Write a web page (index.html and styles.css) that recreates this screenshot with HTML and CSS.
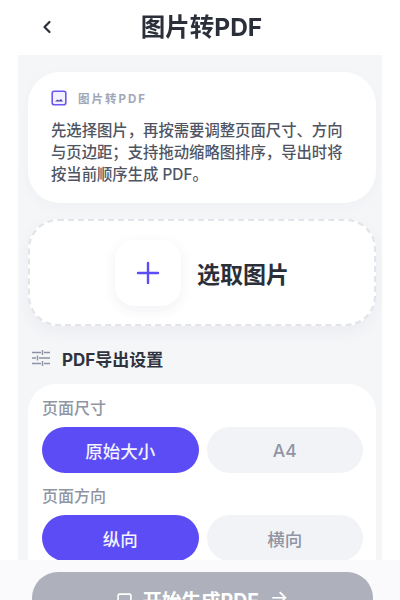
FILE: index.html
```html
<!DOCTYPE html>
<html lang="zh-CN">
<head>
<meta charset="utf-8">
<title>图片转PDF</title>
<link rel="stylesheet" href="styles.css">
</head>
<body>
<div class="page">
  <header class="topbar">
    <svg class="back" viewBox="0 0 10 14" width="10" height="14"><path d="M7.5 2 L2.5 7 L7.5 12" fill="none" stroke="#2b2f3a" stroke-width="2.2" stroke-linecap="round" stroke-linejoin="round"/></svg>
    <h1 class="title">图片转PDF</h1>
  </header>
  <main class="content">
    <section class="intro">
      <div class="intro-head">
        <svg class="intro-icon" viewBox="0 0 16 16" width="16" height="16"><rect x="1.2" y="1.2" width="13.6" height="13.6" rx="2" fill="#f3f0ff" stroke="#6a56f0" stroke-width="1.6"/><path d="M4 11.5 L6.5 9.5 L8 10.5 L10 9 L12 11.5 Z" fill="#4b3fb5"/></svg>
        <span class="intro-tag">图片转PDF</span>
      </div>
      <p class="intro-text">先选择图片，再按需要调整页面尺寸、方向与页边距；支持拖动缩略图排序，导出时将按当前顺序生成 PDF。</p>
    </section>
    <section class="drop">
      <div class="plus-box">
        <svg viewBox="0 0 24 24" width="24" height="24"><path d="M12 2 V22 M2 12 H22" stroke="#5b4cf5" stroke-width="2.4" stroke-linecap="round" fill="none"/></svg>
      </div>
      <span class="drop-label">选取图片</span>
    </section>
    <div class="section-head">
      <svg viewBox="0 0 20 18" width="20" height="18"><path d="M1 3.5 H10 M13 3.5 H19 M1 9 H5 M8 9 H19 M1 14.5 H10 M13 14.5 H19 M11.5 1 V6 M6.5 6.5 V11.5 M11.5 12 V17" stroke="#8d93a3" stroke-width="1.4" fill="none"/></svg>
      <h2 class="section-title">PDF导出设置</h2>
    </div>
    <section class="settings">
      <div class="field-label">页面尺寸</div>
      <div class="options">
        <div class="opt on">原始大小</div>
        <div class="opt">A4</div>
      </div>
      <div class="field-label">页面方向</div>
      <div class="options">
        <div class="opt on">纵向</div>
        <div class="opt">横向</div>
      </div>
    </section>
  </main>
  <footer class="bottom">
    <div class="start">
      <svg viewBox="0 0 14 14" width="15" height="15"><rect x="1" y="1" width="12" height="12" rx="1.5" fill="none" stroke="#fff" stroke-width="1.5"/></svg>
      <span>开始生成PDF</span>
      <span class="arrow">→</span>
    </div>
  </footer>
</div>
</body>
</html>
```
FILE: styles.css
```css
* { box-sizing: border-box; }
html, body { margin: 0; padding: 0; height: 100%; background: #fff; }
body { font-family: Inter, "Noto Sans CJK SC", sans-serif; color: #2b2f3a; overflow: hidden; }
.page { width: 400px; height: 600px; display: flex; flex-direction: column; overflow: hidden; filter: blur(0.6px); }
.topbar { height: 55px; flex: none; display: flex; align-items: center; justify-content: center; position: relative; }
.back { position: absolute; left: 42px; top: 20px; }
.title { margin: 0 0 0 3px; font-size: 24.5px; font-weight: 700; line-height: 55px; color: #2b2f3a; }
.content { height: 505px; flex: none; margin: 0 18px; padding: 17px 6px 0 10px; background: #f5f6f8; overflow: hidden; }
.intro { height: 131px; background: #fff; border-radius: 32px; padding: 17px 24px 0 23px; box-shadow: 0 4px 14px rgba(40, 50, 90, 0.03); }
.intro-head { display: flex; align-items: center; gap: 11px; height: 17px; }
.intro-tag { font-size: 11.5px; font-weight: 700; letter-spacing: 2px; color: #a2a7b8; }
.intro-text { margin: 14px 0 0; font-size: 15.35px; line-height: 22px; font-weight: 500; color: #4f5563; }
.drop { height: 107px; margin-top: 16px; background: #fff; border: 2px dashed #e2e4ea; border-radius: 30px; display: flex; align-items: center; justify-content: center; gap: 16px; box-shadow: 0 6px 16px rgba(40, 50, 90, 0.05); }
.plus-box { width: 66px; height: 66px; border-radius: 20px; background: #fff; display: flex; align-items: center; justify-content: center; box-shadow: 0 4px 14px rgba(40, 50, 90, 0.07); }
.drop-label { font-size: 23px; font-weight: 700; color: #2b2f3a; }
.section-head { display: flex; align-items: center; gap: 11px; height: 20px; margin: 22px 0 0 3px; }
.section-title { margin: 0; font-size: 17px; font-weight: 700; color: #2f3340; }
.settings { height: 240px; margin-top: 16px; background: #fff; border-radius: 28px 28px 0 0; padding: 14px 13px 0 14px; }
.field-label { font-size: 16px; line-height: 21px; color: #8f95a3; font-weight: 500; }
.options { display: grid; grid-template-columns: 1fr 1fr; gap: 8px; margin: 8px 0 13px; }
.opt { height: 46px; border-radius: 23px; background: #f2f3f7; color: #8f95a3; font-size: 17.5px; font-weight: 500; display: flex; align-items: center; justify-content: center; }
.opt.on { background: #5b4cf5; color: #f3f2ff; }
.bottom { flex: 1; padding: 12px 27px 0 32px; background: #fafafc; }
.start { height: 60px; border-radius: 26px; background: #aeb1bb; color: #fff; font-size: 19.5px; font-weight: 700; display: flex; justify-content: center; gap: 11px; padding-top: 13px; }
.start svg { margin-top: 8px; }
.arrow { font-weight: 400; }
```
